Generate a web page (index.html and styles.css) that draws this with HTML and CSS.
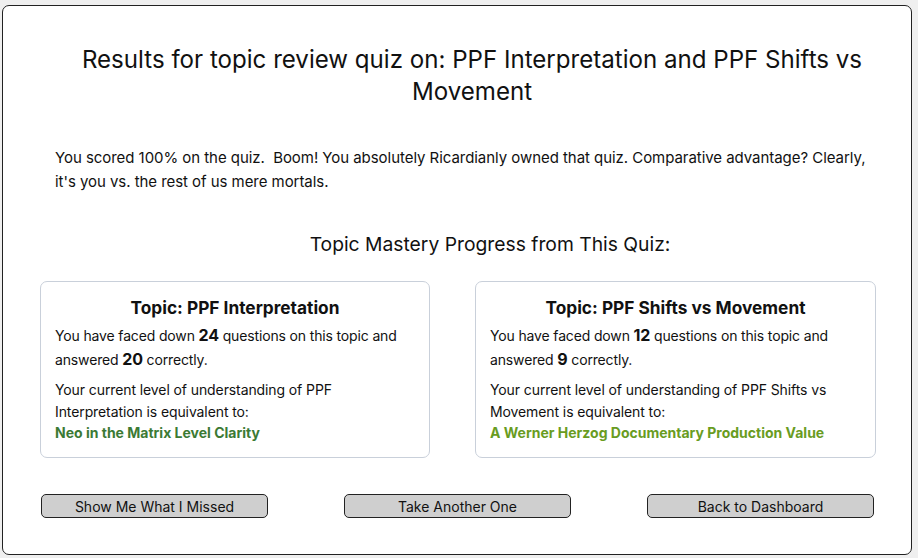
FILE: index.html
```html
<!DOCTYPE html>
<html>
<head>
<meta charset="utf-8">
<link rel="stylesheet" href="styles.css">
</head>
<body>
<div class="page">
  <h1 class="title">Results for topic review quiz on: PPF Interpretation and PPF Shifts vs Movement</h1>
  <p class="summary">You scored 100% on the quiz.&nbsp; Boom! You absolutely Ricardianly owned that quiz. Comparative advantage? Clearly, it's you vs. the rest of us mere mortals.</p>
  <h2 class="subtitle">Topic Mastery Progress from This Quiz:</h2>
  <div class="cards">
    <div class="card">
      <h3 class="card-title">Topic: PPF Interpretation</h3>
      <p class="stats">You have faced down <strong>24</strong> questions on this topic and answered <strong>20</strong> correctly.</p>
      <p class="level">Your current level of understanding of PPF Interpretation is equivalent to:<br><span class="rank rank-dark">Neo in the Matrix Level Clarity</span></p>
    </div>
    <div class="card">
      <h3 class="card-title">Topic: PPF Shifts vs Movement</h3>
      <p class="stats">You have faced down <strong>12</strong> questions on this topic and answered <strong>9</strong> correctly.</p>
      <p class="level">Your current level of understanding of PPF Shifts vs Movement is equivalent to:<br><span class="rank rank-light">A Werner Herzog Documentary Production Value</span></p>
    </div>
  </div>
  <div class="actions">
    <button class="btn">Show Me What I Missed</button>
    <button class="btn">Take Another One</button>
    <button class="btn">Back to Dashboard</button>
  </div>
</div>
</body>
</html>
```

FILE: styles.css
```css
html, body {
  margin: 0;
  padding: 0;
  background: #efefef;
  font-family: Inter, "Noto Sans", "Liberation Sans", sans-serif;
  color: #111;
}

.page {
  box-sizing: border-box;
  margin: 5px 0 0 2px;
  width: 910px;
  height: 550px;
  background: #fff;
  border: 1px solid #222;
  border-radius: 7px;
  overflow: hidden;
}

.title {
  margin: 38px 0 0 0;
  padding: 0 20px 0 50px;
  font-size: 24.1px;
  font-weight: 400;
  line-height: 32px;
  text-align: center;
}

.summary {
  margin: 38px 0 0 0;
  padding: 0 36px 0 52px;
  font-size: 15px;
  letter-spacing: -0.05px;
  line-height: 24px;
}

.subtitle {
  margin: 36px 0 0 0;
  padding-left: 66px;
  font-size: 19.3px;
  font-weight: 400;
  line-height: 28px;
  text-align: center;
}

.cards {
  display: grid;
  grid-template-columns: 390px 401px;
  column-gap: 45px;
  margin: 23px 0 0 37px;
}

.card {
  box-sizing: border-box;
  height: 177px;
  border: 1px solid #c9d0da;
  border-radius: 7px;
  padding: 14px 14px 0 14px;
}

.card-title {
  margin: 0;
  font-size: 17.3px;
  font-weight: 700;
  line-height: 24px;
  text-align: center;
}

.stats {
  margin: 4px 0 0 0;
  font-size: 14px;
  letter-spacing: -0.15px;
  line-height: 24px;
}

.stats strong {
  font-size: 16px;
  line-height: 1;
}

.level {
  margin: 7px 0 0 0;
  font-size: 14px;
  letter-spacing: -0.1px;
  line-height: 21.5px;
}

.rank {
  font-weight: 700;
  letter-spacing: 0;
}

.rank-dark {
  color: #3b7a34;
}

.rank-light {
  color: #699c1f;
}

.actions {
  display: flex;
  justify-content: space-between;
  margin: 36px 37px 0 38px;
}

.btn {
  box-sizing: border-box;
  width: 227px;
  height: 24px;
  padding: 0;
  background: #cfcfcf;
  border: 1px solid #222;
  border-radius: 5px;
  font-family: Inter, "Noto Sans", "Liberation Sans", sans-serif;
  font-size: 14px;
  color: #111;
}
```
